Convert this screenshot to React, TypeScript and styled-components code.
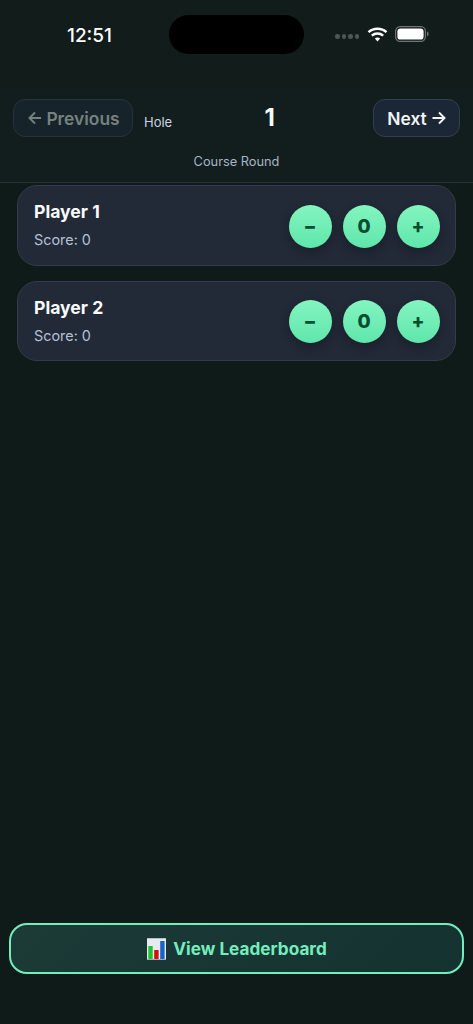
import React from "react"
import styled, { createGlobalStyle } from "styled-components"

const GlobalStyle = createGlobalStyle`
  html, body {
    margin: 0;
    padding: 0;
    background: #0f1b18;
  }
  * {
    box-sizing: border-box;
  }
`

const Page = styled.div`
  width: 473px;
  height: 1024px;
  display: flex;
  flex-direction: column;
  overflow: hidden;
  background: #0f1b18;
  font-family: Inter, "Liberation Sans", sans-serif;
  -webkit-font-smoothing: antialiased;
`

const StatusBar = styled.div`
  height: 88px;
  flex-shrink: 0;
  display: grid;
  grid-template-columns: 169px 135px 169px;
  align-items: flex-start;
  padding-top: 15px;
  background: #111c1b;
`

const Time = styled.div`
  padding-left: 67px;
  padding-top: 9px;
  font-size: 19px;
  line-height: 24px;
  font-weight: 550;
  color: #ffffff;
`

const Island = styled.div`
  height: 39px;
  border-radius: 20px;
  background: #000000;
`

const StatusIcons = styled.div`
  display: flex;
  align-items: center;
  padding-left: 31px;
  padding-top: 11px;
`

const SignalDots = styled.div`
  display: flex;
  gap: 2px;
  margin-top: 5px;
  margin-right: 8px;
`

const Dot = styled.span`
  width: 4.5px;
  height: 4.5px;
  border-radius: 50%;
  background: #4d5755;
`

const Header = styled.header`
  flex-shrink: 0;
  height: 95px;
  padding: 11px 13px 0;
  background: #121e1d;
  border-bottom: 1px solid #26322f;
`

const NavRow = styled.div`
  display: flex;
  align-items: center;
  gap: 11px;
`

const NavButton = styled.button<{ $disabled?: boolean }>`
  height: 38px;
  width: ${(p) => (p.$disabled ? "120px" : "87px")};
  flex-shrink: 0;
  display: flex;
  align-items: center;
  justify-content: center;
  gap: ${(p) => (p.$disabled ? "4px" : "5px")};
  padding: 0 0 0 ${(p) => (p.$disabled ? "2px" : "0")};
  border-radius: 12px;
  border: 1px solid ${(p) => (p.$disabled ? "#27323a" : "#333f4e")};
  background: ${(p) => (p.$disabled ? "#17232a" : "#1c2736")};
  color: ${(p) => (p.$disabled ? "#76827f" : "#f1f5f9")};
  font-family: inherit;
  font-size: 17.4px;
  font-weight: 600;
`

const HoleInfo = styled.div`
  flex: 1;
  display: flex;
  align-items: center;
`

const HoleLabel = styled.span`
  font-size: 13px;
  line-height: 16px;
  margin-top: 7px;
  color: #cbd5e1;
`

const HoleNumber = styled.span`
  flex: 1;
  padding-left: 5px;
  text-align: center;
  font-size: 24px;
  line-height: 30px;
  font-weight: 700;
  color: #f4fbf8;
`

const RoundName = styled.div`
  margin-top: 17px;
  text-align: center;
  font-size: 12.8px;
  line-height: 16px;
  color: #a7b4c6;
`

const PlayerList = styled.main`
  flex: 1;
  display: flex;
  flex-direction: column;
  gap: 15px;
  padding: 2px 17px 0;
`

const PlayerCard = styled.section`
  height: 80.5px;
  display: flex;
  align-items: center;
  justify-content: space-between;
  padding: 0 15.5px 0 16px;
  border-radius: 20px;
  border: 1px solid #323c4a;
  background: #222937;
`

const PlayerInfo = styled.div`
  display: flex;
  flex-direction: column;
  gap: 9px;
`

const PlayerName = styled.div`
  font-size: 17.6px;
  line-height: 21px;
  font-weight: 700;
  color: #f8fafc;
`

const PlayerScore = styled.div`
  font-size: 14.4px;
  line-height: 18px;
  color: #b4c0d6;
`

const Controls = styled.div`
  display: flex;
  gap: 11px;
  margin-top: 2px;
`

const RoundButton = styled.button`
  width: 43px;
  height: 43px;
  padding: 0;
  display: flex;
  align-items: center;
  justify-content: center;
  border: none;
  border-radius: 50%;
  background: linear-gradient(180deg, #84f5bf 0%, #5fe6ac 100%);
  box-shadow: 0 4px 10px rgba(8, 16, 20, 0.35);
  color: #064e2f;
  font-family: inherit;
  font-size: 19px;
  font-weight: 800;
`

const Footer = styled.footer`
  flex-shrink: 0;
  padding: 0 9px 50px;
`

const LeaderboardButton = styled.button`
  width: 100%;
  height: 51px;
  display: flex;
  align-items: center;
  justify-content: center;
  gap: 7px;
  padding: 0 0 0 1px;
  border: 2px solid #74edbd;
  border-radius: 18px;
  background: linear-gradient(135deg, #1c3a36 0%, #143230 100%);
  color: #74edbd;
  font-family: inherit;
  font-size: 17.2px;
  font-weight: 700;
`

const WifiIcon = () => (
  <svg width="21" height="15" viewBox="0 0 21 15" fill="none">
    <path d="M1.5 5.2C6.6 .6 14.4 .6 19.5 5.2" stroke="#fff" strokeWidth="2.4" />
    <path d="M4.8 8.6C8 5.8 13 5.8 16.2 8.6" stroke="#fff" strokeWidth="2.4" />
    <path d="M7.9 11.5C9.4 10.3 11.6 10.3 13.1 11.5L10.5 14.6Z" fill="#fff" />
  </svg>
)

const BatteryIcon = () => (
  <svg width="34" height="16" viewBox="0 0 34 16" fill="none" style={{ marginLeft: 7 }}>
    <rect x="0.6" y="0.6" width="29.8" height="14.8" rx="4.6" stroke="#6d7674" strokeWidth="1.2" />
    <rect x="2.4" y="2.4" width="26.2" height="11.2" rx="3.2" fill="#fff" />
    <path d="M32 5.6c1 .3 1.6 1.2 1.6 2.4s-.6 2.1-1.6 2.4Z" fill="#6d7674" />
  </svg>
)

const ChartIcon = () => (
  <svg width="19" height="22" viewBox="0 0 19 22">
    <rect width="19" height="22" fill="#e6ebf0" />
    <rect x="0" y="0" width="19" height="0.8" fill="#aab4c0" />
    <rect x="0" y="21.2" width="19" height="0.8" fill="#8d99a6" />
    <rect x="1.3" y="8" width="4.4" height="13" fill="#1fc32d" />
    <rect x="7.2" y="12" width="4.4" height="9" fill="#d40f0f" />
    <rect x="13.2" y="3" width="4.4" height="18" fill="#1a63c9" />
  </svg>
)

const ArrowIcon = ({ left }: { left?: boolean }) => (
  <svg width="14" height="14" viewBox="0 0 14 14" fill="none" stroke="currentColor" strokeWidth="1.9">
    {left ? <path d="M13 7H1.5M7 1.5 1.5 7 7 12.5" /> : <path d="M.5 7h12M7 1.5 12.5 7 7 12.5" />}
  </svg>
)

const players = ["Player 1", "Player 2"]

const App: React.FC = () => {
  return (
    <>
      <GlobalStyle />
      <Page>
        <StatusBar>
          <Time>12:51</Time>
          <Island />
          <StatusIcons>
            <SignalDots>
              <Dot />
              <Dot />
              <Dot />
              <Dot />
            </SignalDots>
            <WifiIcon />
            <BatteryIcon />
          </StatusIcons>
        </StatusBar>
        <Header>
          <NavRow>
            <NavButton $disabled>
              <ArrowIcon left />
              Previous
            </NavButton>
            <HoleInfo>
              <HoleLabel>Hole</HoleLabel>
              <HoleNumber>1</HoleNumber>
            </HoleInfo>
            <NavButton>
              Next
              <ArrowIcon />
            </NavButton>
          </NavRow>
          <RoundName>Course Round</RoundName>
        </Header>
        <PlayerList>
          {players.map((name) => (
            <PlayerCard key={name}>
              <PlayerInfo>
                <PlayerName>{name}</PlayerName>
                <PlayerScore>Score: 0</PlayerScore>
              </PlayerInfo>
              <Controls>
                <RoundButton>−</RoundButton>
                <RoundButton>0</RoundButton>
                <RoundButton>+</RoundButton>
              </Controls>
            </PlayerCard>
          ))}
        </PlayerList>
        <Footer>
          <LeaderboardButton>
            <ChartIcon />
            View Leaderboard
          </LeaderboardButton>
        </Footer>
      </Page>
    </>
  )
}

export default App
